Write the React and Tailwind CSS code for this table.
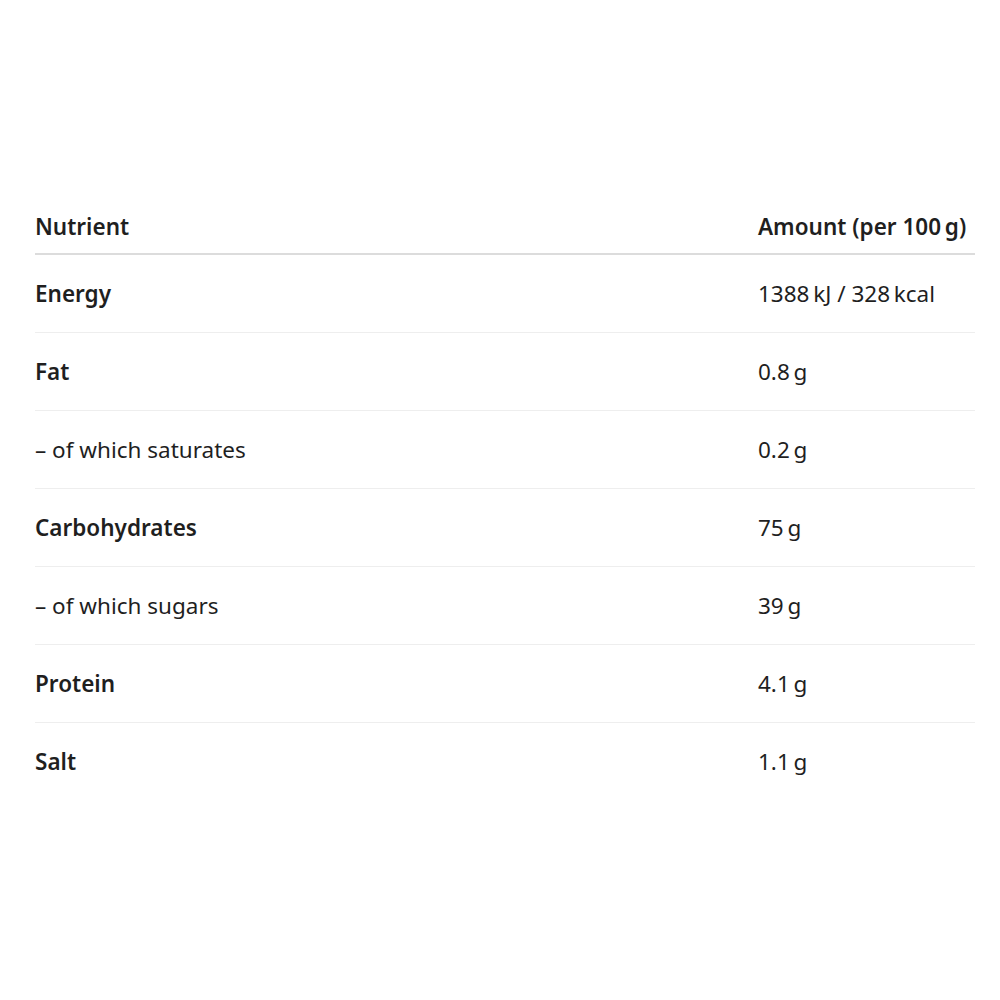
const rows = [
  { name: "Energy", amount: "1388\u202FkJ / 328\u202Fkcal", bold: true },
  { name: "Fat", amount: "0.8\u202Fg", bold: true },
  { name: "\u2013 of which saturates", amount: "0.2\u202Fg", bold: false },
  { name: "Carbohydrates", amount: "75\u202Fg", bold: true },
  { name: "\u2013 of which sugars", amount: "39\u202Fg", bold: false },
  { name: "Protein", amount: "4.1\u202Fg", bold: true },
  { name: "Salt", amount: "1.1\u202Fg", bold: true },
];

export default function App() {
  return (
    <div className="min-h-screen bg-white px-[35px] pt-[201px] text-[#1f1f1f] [font-family:'Noto_Sans',sans-serif]">
      <div className="w-[940px] text-[22.5px]">
        <div className="grid grid-cols-[1fr_217px] border-b-2 border-[#dcdcdc] py-[10px] leading-[32px] font-semibold">
          <div>Nutrient</div>
          <div className="whitespace-nowrap">Amount (per 100&#8239;g)</div>
        </div>
        {rows.map((r, i) => (
          <div
            key={r.name}
            className={
              "grid grid-cols-[1fr_217px] py-[22px] leading-[33px] " +
              (i < rows.length - 1 ? "border-b border-[#eeeeee]" : "border-b border-transparent")
            }
          >
            <div className={r.bold ? "font-semibold" : ""}>{r.name}</div>
            <div className="whitespace-nowrap">{r.amount}</div>
          </div>
        ))}
      </div>
    </div>
  );
}
